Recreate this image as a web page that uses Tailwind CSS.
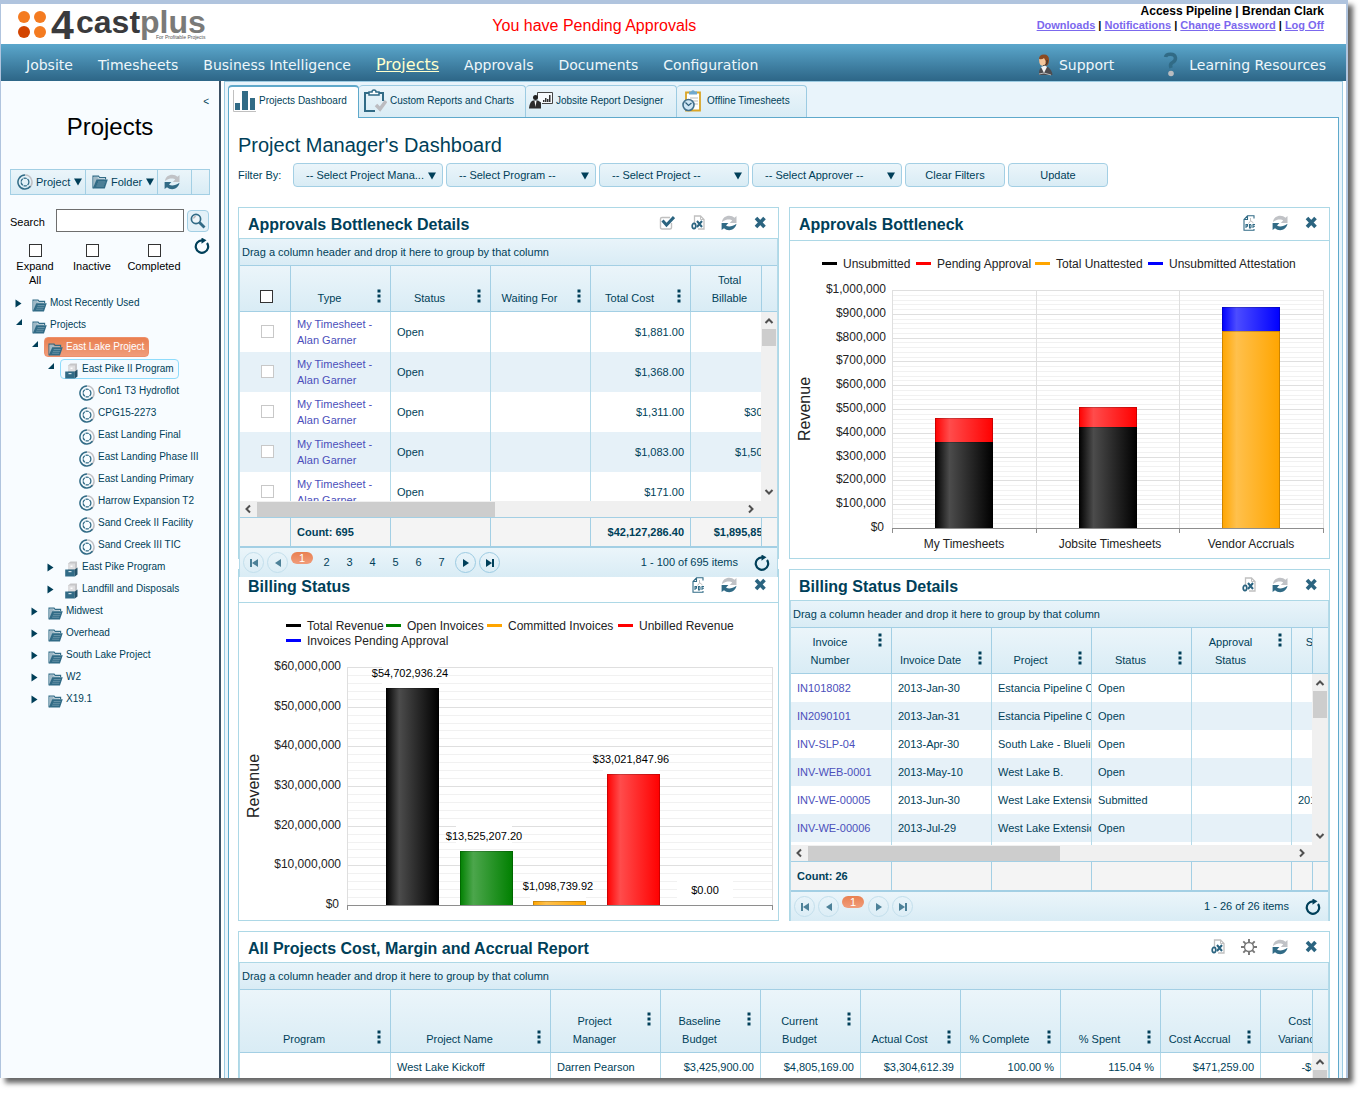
<!DOCTYPE html>
<html lang="en">
<head>
    <meta charset="UTF-8">
    <meta name="viewport" content="width=device-width, initial-scale=1.0">
    <title>4castplus - Project Manager's Dashboard</title>
    <script src="https://cdn.jsdelivr.net/npm/@tailwindcss/browser@4"></script>
</head>
<body class="bg-white font-['Liberation_Sans',Arial,sans-serif] text-[11px] text-[#003f59]">
    <!-- Icon sprite -->
    <svg class="hidden">
        <symbol id="i-refresh" viewBox="0 0 16 16">
            <path fill="#c0c2c6" d="M1 7C1.500 3 4.500.8 8.300.8c2 0 3.900.7 5.200 2L15.500 1v7H8.800l2.400-2.500C10.300 4.800 9.400 4.500 8 4.500 5.500 4.500 4 5 1 7z"/>
            <path fill="#316b86" d="M15.500 8.800c-.8 4.200-4 6.400-7.300 6.400-2 0-3.900-.7-5.200-2L.6 15V8h6.800L5 10.600c1 .7 2 1 3.300 1 2.400 0 4.400-1 7.200-2.800z"/>
        </symbol>
        <symbol id="i-close" viewBox="0 0 16 16">
            <path stroke="#2b6480" stroke-width="3.600" d="M4 3l8.500 9M12.500 3l-8.500 9"/>
        </symbol>
        <symbol id="i-check" viewBox="0 0 16 16">
            <path fill="none" stroke="#c0c0c0" stroke-width="1.400" d="M12.500 8v4.500q0 1.500-1.500 1.500H3q-1.500 0-1.500-1.500V4q0-1.500 1.500-1.500h8"/>
            <path fill="none" stroke="#2b6480" stroke-width="3" d="M3.500 5.500l4 4.500L15 2"/>
        </symbol>
        <symbol id="i-excel" viewBox="0 0 16 16">
            <path fill="#fff" stroke="#c0c0c0" stroke-width="1.300" d="M4.500 8V1h6l3.500 3.500V14H8"/>
            <path fill="none" stroke="#c0c0c0" d="M10.500 1v3.500H14"/>
            <ellipse cx="4" cy="11" rx="1.800" ry="2.600" fill="#fff" stroke="#2b6480" stroke-width="1.700"/>
            <path stroke="#2b6480" stroke-width="2" d="M7 6l5 6M12 6l-5 6"/>
        </symbol>
        <symbol id="i-pdf" viewBox="0 0 16 16">
            <path fill="#fff" stroke="#316b86" stroke-width="1.100" d="M13 3.500V.8H6.500L3 4.500v10.700h10V14M6.500.8v3.700H3"/>
            <path fill="none" stroke="#c0c0c0" d="M9.500 3v3l-2 2.500M9.500 5.500l3 2.500"/>
            <path fill="none" stroke="#316b86" stroke-width="1.100" d="M5 13V9.500h1.500v1.800H5M8.500 9.500h1l.5.700v2l-.5.700h-1zM12 13V9.500h2M12 11.200h2"/>
        </symbol>
        <symbol id="i-gear" viewBox="0 0 16 16">
            <circle cx="8" cy="8" r="4.500" fill="none" stroke="#777" stroke-width="1.400"/>
            <path stroke="#777" stroke-width="1.900" d="M8 0v3.500M8 12.500V16M0 8h3.500M12.500 8H16M2.300 2.300l2.500 2.500M11.200 11.200l2.500 2.500M13.700 2.300l-2.500 2.500M4.800 11.200l-2.500 2.500"/>
        </symbol>
        <symbol id="i-reload" viewBox="0 0 16 16">
            <path fill="none" stroke="#003f59" stroke-width="2.200" d="M13 5a6.200 6.200 0 1 1-5-2.600"/>
            <path fill="#003f59" d="M7.500-.5l5 2.800-5 3.400z"/>
        </symbol>
        <symbol id="i-folder" viewBox="0 0 16 14">
            <path fill="none" stroke="#316b86" stroke-width="1.200" d="M1 13.200V1.200h5.500l1 1.300h6v2"/>
            <path fill="#9fb9c6" d="M1.500 12V2h4l1 1.500h6V5H5z"/>
            <path fill="#316b86" d="M4.500 4.500h11.300l-3 9H.7z"/>
            <path stroke="#8fb0bf" stroke-width=".6" d="M6 7h7.500M5.200 9h7.500M4.400 11h7.500"/>
        </symbol>
        <symbol id="i-program" viewBox="0 0 14 16">
            <path fill="#c6c6c8" d="M3.500 2.500L6 .5h6.500v10l-2 1.500h-7z"/>
            <path fill="#dedee0" d="M3.500 2.500h7V8h-7z"/>
            <path fill="#fff" d="M6 4.500h2V6H6z"/>
            <path fill="#316b86" d="M.7 8.500h9.600v7H.7z"/>
            <path fill="#255269" d="M10.300 8.500L13 6.500v7l-2.700 2z"/>
            <path fill="#cfdfe6" d="M4 10h3v1.200H4z"/>
        </symbol>
        <symbol id="i-project" viewBox="0 0 16 16">
            <path fill="none" stroke="#c0c0c4" stroke-width="1.500" d="M8 1a7 7 0 0 1 4 12.700"/>
            <path fill="none" stroke="#316b86" stroke-width="1.500" d="M8 1a7 7 0 1 0 5.500 11.300"/>
            <circle cx="8" cy="8" r="3.900" fill="none" stroke="#316b86" stroke-width="1.300" stroke-dasharray="3.300 .8"/>
        </symbol>
        <symbol id="i-search" viewBox="0 0 16 16">
            <circle cx="6" cy="6" r="4.600" fill="#eef6fa" stroke="#316b86" stroke-width="1.700"/>
            <path stroke="#c0c0c4" stroke-width="1.500" d="M3.500 5.500q.5-2 2.500-2.200"/>
            <path stroke="#316b86" stroke-width="2.800" d="M9.500 9.500l5 5"/>
        </symbol>
        <symbol id="i-first" viewBox="0 0 10 10"><path fill="currentColor" d="M1 1h2v8H1zM9 1v8L3 5z"/></symbol>
        <symbol id="i-prev" viewBox="0 0 10 10"><path fill="currentColor" d="M8 1v8L2 5z"/></symbol>
        <symbol id="i-next" viewBox="0 0 10 10"><path fill="currentColor" d="M2 1v8l6-4z"/></symbol>
        <symbol id="i-last" viewBox="0 0 10 10"><path fill="currentColor" d="M9 1H7v8h2zM1 1v8l6-4z"/></symbol>
        <symbol id="i-down" viewBox="0 0 10 10"><path fill="#003f59" d="M1 1.500h8L5 8.500z"/></symbol>
        <symbol id="i-dots" viewBox="0 0 4 14"><path fill="#003f59" d="M.5.500h3v3h-3zM.5 5.500h3v3h-3zM.5 10.500h3v3h-3z"/></symbol>
        <symbol id="i-chev" viewBox="0 0 10 10"><path fill="none" stroke="#505050" stroke-width="2" d="M1.500 7L5 3.500 8.500 7"/></symbol>
    </svg>

    <div class="h-screen overflow-hidden pr-[15px] pb-[15px]">
        <div class="flex h-full flex-col border-t-4 border-r-2 border-l border-[#b0c4de] bg-white shadow-[5px_5px_5px_#666]">
            <!-- Header -->
            <header class="grid h-10 shrink-0 grid-cols-3">
                <a href="#" aria-label="4castplus home" class="pl-4">
                    <svg class="h-10 w-[200px]" viewBox="0 0 200 40" font-family="Liberation Sans" font-weight="bold">
                        <circle cx="7" cy="13" r="6" fill="#f47b20"/>
                        <circle cx="23" cy="13" r="6" fill="#f47b20"/>
                        <circle cx="7" cy="28" r="6" fill="#d24400"/>
                        <circle cx="23" cy="28" r="6" fill="#f47b20"/>
                        <text x="34" y="35" font-size="41" fill="#3a3a3c">4</text>
                        <text x="59" y="29" font-size="32" fill="#3a3a3c">cast<tspan fill="#7a7a78">plus</tspan></text>
                        <text x="139" y="35" font-size="5" font-weight="normal" fill="#555">For Profitable Projects</text>
                    </svg>
                </a>
                <p class="pt-2.5 pl-[43px] text-base leading-6 text-[#f00]">You have Pending Approvals</p>
                <div class="pr-[22px] text-right leading-[14px] font-bold text-black">
                    <p class="text-xs leading-[14px]">Access Pipeline | Brendan Clark</p>
                    <p class="whitespace-nowrap">
                        <a href="#" class="text-[#7b68ee] underline">Downloads</a> |
                        <a href="#" class="text-[#7b68ee] underline">Notifications</a> |
                        <a href="#" class="text-[#7b68ee] underline">Change Password</a> |
                        <a href="#" class="text-[#7b68ee] underline">Log Off</a>
                    </p>
                </div>
            </header>

            <!-- Navigation -->
            <nav class="flex h-[37px] shrink-0 items-center justify-between bg-linear-to-b from-[#5ba7cc] to-[#2d6687] pt-1 pr-5 pl-[25px] font-['DejaVu_Sans',Verdana,sans-serif] text-sm text-[#eef7fb]">
                <div class="flex items-center gap-[25px]">
                    <a href="#">Jobsite</a>
                    <a href="#">Timesheets</a>
                    <a href="#">Business Intelligence</a>
                    <a href="#" class="text-base text-[#ffffcc] underline">Projects</a>
                    <a href="#">Approvals</a>
                    <a href="#">Documents</a>
                    <a href="#">Configuration</a>
                </div>
                <div class="flex items-center gap-[49px]">
                    <a href="#" class="flex items-center gap-1.5">
                        <svg class="h-[22px] w-4 self-end" viewBox="0 0 16 22">
                            <path fill="#8b4a22" d="M2 5q0-4.500 5-4.500T12 6q0 5-3 6L3 9z"/>
                            <path fill="#f3c69c" d="M2 5q3 1 5-1 2 2 1.500 6Q6 13 3.500 11 2 9 2 5z"/>
                            <path stroke="#333" fill="none" d="M10 6q1 5-4 6"/>
                            <path fill="#4c4c50" d="M2 21q-.5-6 3-8h6q4 3 4.500 8z"/>
                            <path fill="#f4f4f4" d="M4 13l3 6 3-6-2-1.500z"/>
                            <path stroke="#bbb" stroke-width="1" fill="none" d="M2 20l5-1 7 2"/>
                        </svg>
                        Support
                    </a>
                    <a href="#" class="flex items-center gap-2.5">
                        <svg class="h-[25px] w-4 self-end" viewBox="0 0 16 25">
                            <path fill="none" stroke="#316b86" stroke-width="3.500" d="M2.500 5Q3 2.200 7.500 2.200T12.500 6Q12.500 9 9.500 10.500T8 16"/>
                            <circle cx="8" cy="21.500" r="2.800" fill="#b9bcc0"/>
                        </svg>
                        Learning Resources
                    </a>
                </div>
            </nav>

            <div class="flex min-h-0 flex-1">
                <!-- Sidebar -->
                <aside class="w-[220px] shrink-0 border-r-2 border-[#3b5064] bg-[#f8fcff] text-black">
                    <div class="flex justify-end pt-3 pr-2.5"><button aria-label="Collapse" class="h-4 text-[10px] text-[#003f59]">&lt;</button></div>
                    <h1 class="text-center text-2xl leading-9">Projects</h1>
                    <div class="mx-[9px] mt-6 flex h-[26px] border border-[#a3cfe4] bg-linear-to-b from-[#ebf5fa] to-[#d9ecf5] text-[#003f59]">
                        <button class="flex w-[75px] items-center gap-[3px] border-r border-[#a3cfe4] pl-1.5"><svg class="size-4"><use href="#i-project"/></svg>Project<svg class="size-2.5"><use href="#i-down"/></svg></button>
                        <button class="flex w-[72px] items-center gap-[3px] border-r border-[#a3cfe4] pl-1.5"><svg class="h-3.5 w-4"><use href="#i-folder"/></svg>Folder<svg class="size-2.5"><use href="#i-down"/></svg></button>
                        <button aria-label="Refresh" class="w-[34px] border-r border-[#a3cfe4] pl-1.5"><svg class="size-4"><use href="#i-refresh"/></svg></button>
                    </div>
                    <div class="mt-3.5 flex items-center pl-[9px]">
                        <label for="search" class="w-[46px] pt-1">Search</label>
                        <input id="search" type="text" class="h-[23px] w-32 border border-[#6e6e6e] bg-white px-1">
                        <button aria-label="Search" class="ml-[3px] flex size-[22px] items-center justify-center rounded-[4px] border border-[#a3cfe4] bg-[#e3f1f8]"><svg class="size-4"><use href="#i-search"/></svg></button>
                    </div>
                    <div class="mt-3 flex items-start pl-1 text-center leading-[14px]">
                        <label class="flex w-[60px] flex-col items-center gap-0.5 px-3"><input type="checkbox" class="size-[13px] appearance-none border border-[#333] bg-white">Expand All</label>
                        <label class="flex w-[54px] flex-col items-center gap-0.5"><input type="checkbox" class="size-[13px] appearance-none border border-[#333] bg-white">Inactive</label>
                        <label class="flex w-[70px] flex-col items-center gap-0.5"><input type="checkbox" class="size-[13px] appearance-none border border-[#333] bg-white">Completed</label>
                        <button aria-label="Reload tree" class="-mt-1.5 ml-[5px]"><svg class="size-4"><use href="#i-reload"/></svg></button>
                    </div>
                    <ul id="tree" class="mt-[5px] text-[10px] text-[#003f59]"></ul>
                </aside>

                <!-- Main area -->
                <main class="mx-[3px] flex min-w-0 flex-1 flex-col border-x border-t border-[#9ccbe2] bg-[#e9f4fb] px-[3px] pt-[3px]">
                    <div class="flex h-8 shrink-0 text-[10px]">
                        <button class="relative -mb-px flex w-[131px] items-center gap-[3px] rounded-t-[4px] border border-t-2 border-b-0 border-[#5fa9cb] bg-white pb-1 pl-1">
                            <svg class="h-[22px] w-[23px]" viewBox="0 0 23 22"><path stroke="#c0c0c0" d="M.5 0v21.500H23" fill="none"/><path fill="#316b86" d="M2 13h5v7H2zM9 1h6v19H9zM17 8h5v12h-5z"/></svg>
                            Projects Dashboard
                        </button>
                        <button class="flex w-[167px] items-center gap-[3px] rounded-t-[4px] border border-b-0 border-l-0 border-[#9ccbe2] bg-linear-to-b from-[#ebf5fa] to-[#d9ecf5] pb-0.5 pl-[5px]">
                            <svg class="h-6 w-[23px]" viewBox="0 0 23 24"><path fill="none" stroke="#316b86" stroke-width="2" d="M11 22H1V4h5M14 4h5v8"/><path fill="#fff" stroke="#316b86" stroke-width="1.500" d="M5 3h3q0-2 2-2t2 2h3v3H5z"/><path fill="none" stroke="#bcbcc0" stroke-width="3.500" d="M12 16l4 4 6-8"/></svg>
                            Custom Reports and Charts
                        </button>
                        <button class="flex w-[151px] items-center gap-[3px] rounded-t-[4px] border border-b-0 border-l-0 border-[#9ccbe2] bg-linear-to-b from-[#ebf5fa] to-[#d9ecf5] pb-0.5 pl-[3px]">
                            <svg class="h-[18px] w-6" viewBox="0 0 24 18"><path fill="#f7fafc" stroke="#444" d="M8.500 6V.5h15v11H13"/><path fill="#333" d="M14 8h1.500v2H14zM16 6h1.500v4H16zM18 7h1.500v3H18zM20 3h1.500v7H20z"/><circle cx="6.500" cy="5.500" r="2.500" fill="#222"/><path fill="#2c2c2c" d="M0 16q1-7 4-7.500h5l3 2v6H0z"/><path fill="#fff" d="M5.500 9h2l-1 6z"/></svg>
                            Jobsite Report Designer
                        </button>
                        <button class="flex w-[130px] items-center gap-[5px] rounded-t-[4px] border border-b-0 border-l-0 border-[#9ccbe2] bg-linear-to-b from-[#ebf5fa] to-[#d9ecf5] pb-0.5 pl-[5px]">
                            <svg class="h-[22px] w-5" viewBox="0 0 20 22"><path fill="#fff" stroke="#d9a526" stroke-width="1.800" d="M4 2.500h14v18H4z"/><path fill="#6fa8cf" d="M7 1.500h2Q11-1 13 1.500h2v3H7z"/><path stroke="#bbb" d="M8 8h8M8 11h8M11 14h5"/><circle cx="6.500" cy="15" r="5.500" fill="#cfe6f5" stroke="#44708c" stroke-width="1.600"/><path fill="none" stroke="#2d5d7a" stroke-width="1.200" d="M3.500 12.500l3 3 3-2.500"/></svg>
                            Offline Timesheets
                        </button>
                    </div>

                    <div class="min-h-0 flex-1 overflow-hidden border border-b-0 border-[#5fa9cb] bg-white pr-2 pl-[9px]">
                        <h2 class="mt-3.5 text-xl leading-[26px]">Project Manager's Dashboard</h2>
                        <div class="mt-[5px] flex h-6 items-center gap-[3px]">
                            <span class="w-[52px] whitespace-nowrap">Filter By:</span>
                            <div class="relative w-[150px]">
                                <select aria-label="Project manager" class="h-6 w-full appearance-none rounded-[4px] border border-[#a3cfe4] bg-linear-to-b from-[#ebf5fa] to-[#d9ecf5] pl-3"><option>-- Select Project Mana...</option></select>
                                <svg class="pointer-events-none absolute top-2 right-1.5 size-2.5"><use href="#i-down"/></svg>
                            </div>
                            <div class="relative w-[150px]">
                                <select aria-label="Program" class="h-6 w-full appearance-none rounded-[4px] border border-[#a3cfe4] bg-linear-to-b from-[#ebf5fa] to-[#d9ecf5] pl-3"><option>-- Select Program --</option></select>
                                <svg class="pointer-events-none absolute top-2 right-1.5 size-2.5"><use href="#i-down"/></svg>
                            </div>
                            <div class="relative w-[150px]">
                                <select aria-label="Project" class="h-6 w-full appearance-none rounded-[4px] border border-[#a3cfe4] bg-linear-to-b from-[#ebf5fa] to-[#d9ecf5] pl-3"><option>-- Select Project --</option></select>
                                <svg class="pointer-events-none absolute top-2 right-1.5 size-2.5"><use href="#i-down"/></svg>
                            </div>
                            <div class="relative w-[150px]">
                                <select aria-label="Approver" class="h-6 w-full appearance-none rounded-[4px] border border-[#a3cfe4] bg-linear-to-b from-[#ebf5fa] to-[#d9ecf5] pl-3"><option>-- Select Approver --</option></select>
                                <svg class="pointer-events-none absolute top-2 right-1.5 size-2.5"><use href="#i-down"/></svg>
                            </div>
                            <button class="h-6 w-[100px] rounded-[4px] border border-[#a3cfe4] bg-linear-to-b from-[#ebf5fa] to-[#d9ecf5]">Clear Filters</button>
                            <button class="h-6 w-[100px] rounded-[4px] border border-[#a3cfe4] bg-linear-to-b from-[#ebf5fa] to-[#d9ecf5]">Update</button>
                        </div>

                        <div class="mt-5 grid grid-cols-2 gap-2.5">
                            <!-- Approvals Bottleneck Details -->
                            <section class="relative z-10 h-[352px] border border-[#add8e6]">
                                <div data-title="Approvals Bottleneck Details" data-icons="check excel refresh close"></div>
                                <div id="approvals-grid"></div>
                            </section>

                            <!-- Approvals Bottleneck -->
                            <section class="h-[352px] border border-[#add8e6]">
                                <div data-title="Approvals Bottleneck" data-icons="pdf refresh close"></div>
                                <svg id="approvals-chart" class="w-full" viewBox="0 0 539 318" font-family="Liberation Sans" font-size="12" fill="#232323"></svg>
                            </section>

                            <!-- Billing Status -->
                            <section class="h-[352px] border border-[#add8e6]">
                                <div data-title="Billing Status" data-icons="pdf refresh close"></div>
                                <svg id="billing-chart" class="w-full" viewBox="0 0 539 318" font-family="Liberation Sans" font-size="12" fill="#232323"></svg>
                            </section>

                            <!-- Billing Status Details -->
                            <section class="h-[352px] border border-[#add8e6]">
                                <div data-title="Billing Status Details" data-icons="excel refresh close"></div>
                                <div id="billing-grid"></div>
                            </section>

                            <!-- All Projects report -->
                            <section class="col-span-2 border border-[#add8e6]">
                                <div data-title="All Projects Cost, Margin and Accrual Report" data-icons="excel gear refresh close"></div>
                                <div id="projects-grid"></div>
                            </section>
                        </div>
                    </div>
                </main>
            </div>
        </div>
    </div>

    <script>
        const icon = (name, cls) => `<svg class="${cls}"><use href="#i-${name}"/></svg>`;

        // Panel title bars
        document.querySelectorAll('[data-title]').forEach(bar => {
            const tall = bar.parentElement.querySelector('[id$="chart"]');
            bar.className = tall
                ? 'flex h-[33px] items-center justify-between border-b border-[#add8e6] pr-[3px] pb-[3px] pl-[9px]'
                : 'flex h-[31px] items-center justify-between border-b border-[#add8e6] pr-[3px] pb-px pl-[9px]';
            bar.innerHTML = `<h3 class="pt-1 text-base leading-5 font-bold">${bar.dataset.title}</h3>
                <div class="flex">${bar.dataset.icons.split(' ').map(n =>
                    `<button aria-label="${n}" class="flex w-[31px] justify-center">${icon(n, 'size-4')}</button>`).join('')}</div>`;
        });

        // Project tree: [level, kind, label, state]
        const tree = [
            [0, 'folder', 'Most Recently Used', 'closed'],
            [0, 'folder', 'Projects', 'open'],
            [1, 'folder', 'East Lake Project', 'open'],
            [2, 'program', 'East Pike II Program', 'open'],
            [3, 'project', 'Con1 T3 Hydroflot'],
            [3, 'project', 'CPG15-2273'],
            [3, 'project', 'East Landing Final'],
            [3, 'project', 'East Landing Phase III'],
            [3, 'project', 'East Landing Primary'],
            [3, 'project', 'Harrow Expansion T2'],
            [3, 'project', 'Sand Creek II Facility'],
            [3, 'project', 'Sand Creek III TIC'],
            [2, 'program', 'East Pike Program', 'closed'],
            [2, 'program', 'Landfill and Disposals', 'closed'],
            [1, 'folder', 'Midwest', 'closed'],
            [1, 'folder', 'Overhead', 'closed'],
            [1, 'folder', 'South Lake Project', 'closed'],
            [1, 'folder', 'W2', 'closed'],
            [1, 'folder', 'X19.1', 'closed']
        ];
        const indents = ['pl-3', 'pl-7', 'pl-11', 'pl-[59px]'];
        const arrows = {
            closed: '<svg class="size-2.5" viewBox="0 0 10 10"><path fill="#003f59" d="M2.500 1.500v8l6-4z"/></svg>',
            open: '<svg class="size-2.5 self-start" viewBox="0 0 10 10"><path fill="#003f59" d="M9 2v6H3z"/></svg>'
        };
        document.getElementById('tree').innerHTML = tree.map(([level, kind, label, state]) => {
            let box = 'border-transparent';
            if (label === 'East Lake Project') box = 'border-[#ee8f6a] bg-linear-to-b from-[#e98050] to-[#f09c7a] text-white';
            if (label === 'East Pike II Program') box = 'border-[#8fdcfc] bg-[#f3faff]';
            const size = kind === 'folder' ? 'mt-1 h-[13px] w-[15px]' : kind === 'program' ? 'mt-[3px] h-4 w-[15px]' : 'mt-[3px] size-4';
            return `<li class="flex h-[22px] items-center ${indents[level]}">
                <span class="flex h-4 w-2.5 items-center">${arrows[state] || ''}</span>
                <a href="#" class="ml-[5px] flex h-5 items-center gap-[3px] rounded-[4px] border pr-1 pl-[3px] whitespace-nowrap ${box}">${icon(kind, size)}<span class="pb-0.5">${label}</span></a>
            </li>`;
        }).join('');

        // Data grids
        const colgroup = cols => `<colgroup>${cols.map(c => `<col style="width:${c.w}px">`).join('')}</colgroup>`;

        function grid(id, o) {
            const total = o.cols.reduce((s, c) => s + c.w, 0);
            const table = rows => `<div class="min-w-0 flex-1 overflow-hidden"><table class="table-fixed border-separate border-spacing-0" style="width:${total}px">${colgroup(o.cols)}<tbody>${rows}</tbody></table></div>`;
            const head = o.cols.map(c => c.check
                ? '<th class="border-r border-[#a3cfe4] pb-2 pl-0.5 align-bottom"><input type="checkbox" aria-label="Select all" class="mx-auto block size-[13px] appearance-none border border-[#333] bg-white"></th>'
                : `<th class="border-r border-[#a3cfe4] pb-1 align-bottom font-normal"><div class="flex">
                    <span class="flex-1 leading-[18px]">${c.t}</span>
                    <button aria-label="Column menu" class="flex w-[22px] justify-center">${icon('dots', 'h-3.5 w-1')}</button></div></th>`).join('');
            const body = o.rows.map(r => `<tr class="${o.rowH} even:bg-[#e6f1f8]">${r.map((v, i) => {
                const c = o.cols[i];
                if (c.check) return '<td class="border-r border-[#b5dae9] pb-0.5 pl-1"><input type="checkbox" aria-label="Select row" class="mx-auto block size-[13px] appearance-none border border-[#c8c8c8] bg-white"></td>';
                if (c.link) v = `<a href="#" class="text-[#4b4fbb]">${v}</a>`;
                return `<td class="overflow-hidden border-r border-[#b5dae9] px-1.5 leading-4 ${c.right ? 'text-right' : ''} ${c.link ? '' : 'whitespace-nowrap'}">${v}</td>`;
            }).join('')}</tr>`).join('');
            const foot = o.foot ? `
                <div class="flex h-4 items-center bg-[#f0f0f0] pr-[21px] pl-[3px]">
                    ${icon('chev', 'size-2.5 -rotate-90')}
                    <div class="flex-1 px-1"><div class="h-[15px] bg-[#cdcdcd] ${o.thumb}"></div></div>
                    ${icon('chev', 'size-2.5 rotate-90')}
                </div>
                <div class="flex border-t border-[#a3cfe4] bg-[#f4f4f4]">
                    ${table(`<tr class="h-7 font-bold">${o.foot.map((v, i) => `<td class="border-r border-[#a3cfe4] px-1.5 pt-px whitespace-nowrap ${o.cols[i].right ? 'text-right' : ''}">${v}</td>`).join('')}</tr>`)}
                    <div class="w-4 border-l border-[#a3cfe4]"></div>
                </div>
                ${pager(o.pages, o.count)}` : '';
            document.getElementById(id).innerHTML = `<div class="border-x border-[#b5dae9]">
                <div class="h-[27px] border-b border-[#a3cfe4] bg-linear-to-b from-[#e9f4fa] to-[#d9ecf5] pl-0.5 leading-[27px]">Drag a column header and drop it here to group by that column</div>
                <div class="flex border-b border-[#a3cfe4] bg-linear-to-b from-[#ebf5fa] to-[#d9ecf5]">
                    ${table(`<tr class="${o.headH}">${head}</tr>`)}
                    <div class="w-4 border-l border-[#a3cfe4]"></div>
                </div>
                <div class="flex overflow-hidden ${o.bodyH}">
                    ${table(body)}
                    <div class="flex w-4 flex-col items-center bg-[#f0f0f0] py-1">
                        ${icon('chev', 'size-2.5 shrink-0')}
                        <div class="mt-[3px] w-[14px] bg-[#cdcdcd] ${o.vthumb}"></div>
                        ${icon('chev', 'mt-auto size-2.5 shrink-0 rotate-180')}
                    </div>
                </div>${foot}</div>`;
        }

        function pager(pages, count) {
            const on = 'border-[#9ccbe2] text-[#003f59]';
            const off = 'border-[#c3dfec] text-[#4d8198]';
            const next = pages > 1 ? on : off;
            const round = (name, cls) => `<button aria-label="${name} page" class="mr-[3px] flex size-[21px] items-center justify-center rounded-full border ${cls}">${icon(name, 'size-2.5')}</button>`;
            let numbers = '';
            for (let i = 2; i <= pages; i++) numbers += `<button class="w-[23px]">${i}</button>`;
            return `<div class="flex h-[31px] items-center border-t-2 border-[#a3cfe4] bg-linear-to-b from-[#ebf5fa] to-[#d9ecf5] pr-[7px] pl-[3px]">
                ${round('first', off)}${round('prev', off)}
                <button class="mt-1 mr-0.5 h-3 w-[22px] self-start rounded-full bg-linear-to-b from-[#e98050] to-[#f09c7a] leading-3 text-white">1</button>
                ${numbers}<span class="w-0.5"></span>
                ${round('next', next)}${round('last', next)}
                <span class="mr-4 ml-auto">${count}</span>
                <button aria-label="Reload">${icon('reload', 'size-4')}</button>
            </div>`;
        }

        grid('approvals-grid', {
            cols: [{ w: 51, check: true }, { w: 100, t: 'Type', link: true }, { w: 100, t: 'Status' }, { w: 100, t: 'Waiting For' },
                { w: 100, t: 'Total Cost', right: true }, { w: 100, t: 'Total<br>Billable', right: true }],
            rows: [
                ['', 'My Timesheet - Alan Garner', 'Open', '', '$1,881.00', ''],
                ['', 'My Timesheet - Alan Garner', 'Open', '', '$1,368.00', ''],
                ['', 'My Timesheet - Alan Garner', 'Open', '', '$1,311.00', '$300.00'],
                ['', 'My Timesheet - Alan Garner', 'Open', '', '$1,083.00', '$1,500.00'],
                ['', 'My Timesheet - Alan Garner', 'Open', '', '$171.00', '']
            ],
            foot: ['', 'Count: 695', '', '', '$42,127,286.40', '$1,895,850.00'],
            headH: 'h-[45px]', rowH: 'h-10', bodyH: 'h-[189px]', vthumb: 'h-[17px]', thumb: 'w-[49%]',
            pages: 7, count: '1 - 100 of 695 items'
        });

        grid('billing-grid', {
            cols: [{ w: 101, t: 'Invoice<br>Number', link: true }, { w: 100, t: 'Invoice Date' }, { w: 100, t: 'Project' }, { w: 100, t: 'Status' },
                { w: 100, t: 'Approval<br>Status' }, { w: 100, t: 'Submitted<br>Date' }],
            rows: [
                ['IN1018082', '2013-Jan-30', 'Estancia Pipeline C', 'Open', '', ''],
                ['IN2090101', '2013-Jan-31', 'Estancia Pipeline C', 'Open', '', ''],
                ['INV-SLP-04', '2013-Apr-30', 'South Lake - Blueline', 'Open', '', ''],
                ['INV-WEB-0001', '2013-May-10', 'West Lake B.', 'Open', '', ''],
                ['INV-WE-00005', '2013-Jun-30', 'West Lake Extension', 'Submitted', '', '2013-Jul-02'],
                ['INV-WE-00006', '2013-Jul-29', 'West Lake Extension', 'Open', '', ''],
                ['', '', '', '', '', '']
            ],
            foot: ['Count: 26', '', '', '', '', ''],
            headH: 'h-[45px]', rowH: 'h-7', bodyH: 'h-[171px]', vthumb: 'h-[27px]', thumb: 'w-[52%]',
            pages: 1, count: '1 - 26 of 26 items'
        });

        grid('projects-grid', {
            cols: [{ w: 151, t: 'Program' }, { w: 160, t: 'Project Name' }, { w: 110, t: 'Project<br>Manager' },
                { w: 100, t: 'Baseline<br>Budget', right: true }, { w: 100, t: 'Current<br>Budget', right: true }, { w: 100, t: 'Actual Cost', right: true },
                { w: 100, t: '% Complete', right: true }, { w: 100, t: '% Spent', right: true }, { w: 100, t: 'Cost Accrual', right: true },
                { w: 100, t: 'Cost<br>Variance', right: true }],
            rows: [['', 'West Lake Kickoff', 'Darren Pearson', '$3,425,900.00', '$4,805,169.00', '$3,304,612.39', '100.00 %', '115.04 %', '$471,259.00', '-$5,171.39']],
            headH: 'h-[62px]', rowH: 'h-7', bodyH: 'h-[171px]', vthumb: 'h-[17px]'
        });

        // Charts
        const shades = { '#000': '#4c4c4c', '#f00': '#ff4c4c', '#ffa500': '#ffc04c', '#00f': '#4c4cff', '#008000': '#4ca64c' };

        function bar(x, y, w, h, color) {
            const gid = 'g' + color.slice(1);
            return `<rect x="${x}" y="${y}" width="${w}" height="${h}" fill="url(#${gid})"/>
                <path d="M${x + 0.5} ${y + h}V${y + 0.5}h${w - 1}v${h}" fill="none" stroke="#000" stroke-opacity=".2"/>`;
        }

        function chart(id, o) {
            const { left, right, top, bottom } = o;
            let s = '<defs>' + Object.entries(shades).map(([c, l]) =>
                `<linearGradient id="g${c.slice(1)}"><stop offset="0" stop-color="${c}"/><stop offset=".25" stop-color="${l}"/><stop offset="1" stop-color="${c}"/></linearGradient>`).join('') + '</defs>';
            const lines = o.labels.length - 1;
            const step = (bottom - top) / lines;
            for (let i = 0; i < lines * 5; i++) {
                const y = Math.round(top + i * step / 5) + 0.5;
                s += `<path d="M${left} ${y}H${right}" stroke="${i % 5 ? '#f1f1f1' : '#dfdfdf'}"/>`;
            }
            o.ticks.forEach(x => {
                s += `<path d="M${x + 0.5} ${top}V${bottom}" stroke="#dfdfdf"/><path d="M${x + 0.5} ${bottom}v5" stroke="#8e8e8e"/>`;
            });
            o.labels.forEach((t, i) => {
                const last = i === lines ? 2 : 0;
                s += `<text x="${left - 6 - last}" y="${Math.round(top + i * step) + 3}" text-anchor="end">${t}</text>`;
            });
            o.legend.forEach(([x, y, color, t]) => {
                s += `<rect x="${x}" y="${y - 6}" width="15" height="3" fill="${color}"/><text x="${x + 21}" y="${y}">${t}</text>`;
            });
            o.bars.forEach(b => s += bar(...b));
            (o.values || []).forEach(([x, y, t]) => {
                s += `<rect x="${x - 28}" y="${y - 16}" width="56" height="24" fill="#fff"/><text x="${x}" y="${y}" text-anchor="middle" font-size="11" fill="#000">${t}</text>`;
            });
            (o.cats || []).forEach(([x, t]) => s += `<text x="${x}" y="${bottom + 20}" text-anchor="middle">${t}</text>`);
            s += `<path d="M${left} ${bottom + 0.5}H${right + 1}" stroke="#8e8e8e"/>`;
            s += `<text transform="translate(20 ${o.titleY}) rotate(-90)" text-anchor="middle" font-size="16">Revenue</text>`;
            document.getElementById(id).innerHTML = s;
        }

        chart('approvals-chart', {
            left: 102, right: 533, top: 49, bottom: 287, titleY: 168,
            labels: ['$1,000,000', '$900,000', '$800,000', '$700,000', '$600,000', '$500,000', '$400,000', '$300,000', '$200,000', '$100,000', '$0'],
            ticks: [102, 246, 389, 533],
            legend: [[32, 27, '#000', 'Unsubmitted'], [126, 27, '#f00', 'Pending Approval'], [245, 27, '#ffa500', 'Total Unattested'], [358, 27, '#00f', 'Unsubmitted Attestation']],
            bars: [[145, 201, 58, 86, '#000'], [145, 177, 58, 24, '#f00'], [289, 186, 58, 101, '#000'], [289, 166, 58, 20, '#f00'],
                [432, 90, 58, 197, '#ffa500'], [432, 66, 58, 24, '#00f']],
            cats: [[174, 'My Timesheets'], [320, 'Jobsite Timesheets'], [461, 'Vendor Accruals']]
        });

        chart('billing-chart', {
            left: 108, right: 533, top: 64, bottom: 302, titleY: 183,
            labels: ['$60,000,000', '$50,000,000', '$40,000,000', '$30,000,000', '$20,000,000', '$10,000,000', '$0'],
            ticks: [108, 533],
            legend: [[47, 27, '#000', 'Total Revenue'], [147, 27, '#008000', 'Open Invoices'], [248, 27, '#ffa500', 'Committed Invoices'],
                [379, 27, '#f00', 'Unbilled Revenue'], [47, 42, '#00f', 'Invoices Pending Approval']],
            bars: [[147, 85, 53, 217, '#000'], [221, 248, 53, 54, '#008000'], [294, 298, 53, 4, '#ffa500'], [368, 171, 53, 131, '#f00']],
            values: [[171, 74, '$54,702,936.24'], [245, 237, '$13,525,207.20'], [319, 287, '$1,098,739.92'], [392, 160, '$33,021,847.96'], [466, 291, '$0.00']]
        });
    </script>
</body>
</html>
